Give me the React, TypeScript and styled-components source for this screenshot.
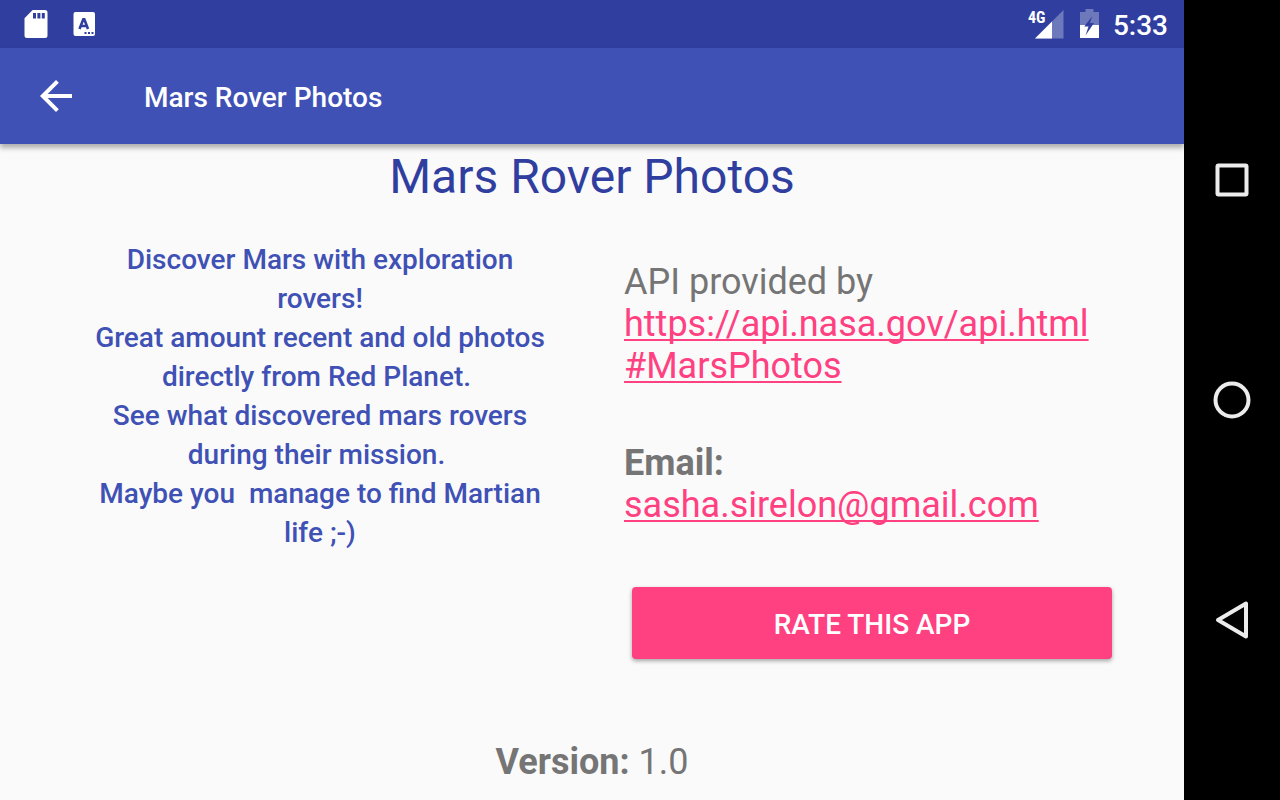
import React from "react";
import styled, { createGlobalStyle } from "styled-components";

const GlobalStyle = createGlobalStyle`
  * { box-sizing: border-box; }
  body { margin: 0; background: #fafafa; font-family: Roboto, "Liberation Sans", sans-serif; }
`;

const Screen = styled.div`
  display: flex;
  min-height: 100vh;
`;

const AppWindow = styled.div`
  flex: 1;
  min-width: 0;
  display: flex;
  flex-direction: column;
  background: #fafafa;
`;

const StatusBar = styled.div`
  display: flex;
  align-items: center;
  justify-content: space-between;
  height: 48px;
  padding: 0 16px 0 24px;
  background: #303f9f;
  color: #fff;
`;

const StatusGroup = styled.div<{ $gap: number }>`
  display: flex;
  align-items: center;
  gap: ${(p) => p.$gap}px;
`;

const Clock = styled.time`
  font-size: 28px;
  font-weight: 500;
  line-height: 32px;
  padding-top: 4px;
`;

const Toolbar = styled.header`
  display: flex;
  align-items: center;
  gap: 64px;
  height: 96px;
  padding: 0 32px;
  background: #3f51b5;
  color: #fff;
  box-shadow: 0 4px 5px rgba(0, 0, 0, 0.3);
`;

const IconButton = styled.button`
  display: flex;
  padding: 0;
  border: 0;
  background: none;
  color: inherit;
  cursor: pointer;
`;

const ToolbarTitle = styled.div`
  padding-top: 4px;
  font-size: 28px;
  font-weight: 500;
  line-height: 32px;
`;

const Content = styled.main`
  padding: 5px 48px 16px;
`;

const Title = styled.h1`
  margin: 0 0 35px;
  color: #303f9f;
  font-size: 48px;
  font-weight: 400;
  line-height: 56px;
  text-align: center;
`;

const Columns = styled.div`
  display: grid;
  grid-template-columns: 1fr 1fr;
`;

const Description = styled.p`
  margin: 0;
  padding: 0 40px;
  color: #3f51b5;
  font-size: 28px;
  font-weight: 500;
  line-height: 39px;
  text-align: center;
  white-space: pre-wrap;
`;

const Details = styled.div`
  display: flex;
  flex-direction: column;
  gap: 55px;
  padding: 21px 16px 0 32px;
`;

const Info = styled.p`
  margin: 0;
  color: #757575;
  font-size: 36px;
  line-height: 42px;
`;

const Link = styled.a`
  color: #ff4081;
  text-decoration: underline;
  text-decoration-thickness: 2px;
  text-underline-offset: 3px;
  text-decoration-skip-ink: none;
`;

const RateButton = styled.button`
  height: 72px;
  margin: 6px 8px 0;
  padding: 4px 16px 0;
  border: 0;
  border-radius: 4px;
  background: #ff4081;
  color: #fff;
  font: 500 28px/32px Roboto, "Liberation Sans", sans-serif;
  text-transform: uppercase;
  box-shadow: 0 2px 4px rgba(0, 0, 0, 0.35);
  cursor: pointer;
`;

const Version = styled(Info)`
  margin-top: 82px;
  text-align: center;
`;

const SystemNav = styled.nav`
  display: flex;
  flex-direction: column;
  align-items: center;
  justify-content: center;
  gap: 172px;
  flex: 0 0 96px;
  background: #000;
  color: #ececec;
`;

const SdCardIcon = () => (
  <svg width="24" height="28" viewBox="0 0 24 28" aria-hidden="true">
    <path
      fill="#fff"
      fillRule="evenodd"
      d="M8.6 0H21a2.5 2.5 0 0 1 2.5 2.5v23A2.5 2.5 0 0 1 21 28H3a2.5 2.5 0 0 1-2.5-2.5V8.2zM9 3v5.400h3V3zM13.400 3v5.400h3V3zM17.800 3v5.400h3V3z"
    />
  </svg>
);

const KeyboardIcon = () => (
  <svg width="22" height="24" viewBox="0 0 22 24" aria-hidden="true">
    <rect x="0.500" width="21.500" height="24" rx="2" fill="#fff" />
    <path d="M6.500 17 10.300 7.200h1l3.700 9.800M8.500 14h4.500" fill="none" stroke="#303f9f" strokeWidth="2.600" />
    <path d="M11.500 20h2v2h-2zM15 20h2v2h-2zM18.500 20h2v2h-2z" fill="#303f9f" />
  </svg>
);

const SignalIcon = () => (
  <svg width="38" height="32" viewBox="0 0 38 32" role="img" aria-label="4G signal">
    <path d="M35.500 2v28.500H7z" fill="#fff" fillOpacity="0.3" />
    <path d="M24 13.500v17H7z" fill="#fff" />
    <text x="0" y="15" fill="#fff" fontFamily="Roboto Condensed, Roboto, sans-serif" fontSize="16" fontWeight="700">
      4G
    </text>
  </svg>
);

const BatteryIcon = () => (
  <svg width="19" height="30" viewBox="0 0 19 30" aria-hidden="true">
    <path d="M5.500 0h8v3H19v13H0V3h5.500z" fill="#fff" fillOpacity="0.3" />
    <path d="M0 16h19v13H0z" fill="#fff" />
    <path d="M12 7.500 4.200 17.500H8.500L5.500 26.500 14 14H10z" fill="#303f9f" />
  </svg>
);

const BackArrowIcon = () => (
  <svg width="48" height="48" viewBox="0 0 24 24" aria-hidden="true">
    <path fill="#fff" d="M20 11H7.830l5.590-5.590L12 4l-8 8 8 8 1.410-1.410L7.830 13H20v-2z" />
  </svg>
);

const NavGlyph = ({ children }: { children: React.ReactNode }) => (
  <svg width="48" height="48" viewBox="0 0 48 48" fill="none" stroke="currentColor" strokeWidth="4" strokeLinejoin="round" aria-hidden="true">
    {children}
  </svg>
);

export default function App() {
  return (
    <Screen>
      <GlobalStyle />
      <AppWindow>
        <StatusBar>
          <StatusGroup $gap={25}>
            <SdCardIcon />
            <KeyboardIcon />
          </StatusGroup>
          <StatusGroup $gap={14}>
            <SignalIcon />
            <BatteryIcon />
            <Clock>5:33</Clock>
          </StatusGroup>
        </StatusBar>
        <Toolbar>
          <IconButton type="button" aria-label="Navigate up">
            <BackArrowIcon />
          </IconButton>
          <ToolbarTitle>Mars Rover Photos</ToolbarTitle>
        </Toolbar>
        <Content>
          <Title>Mars Rover Photos</Title>
          <Columns>
            <Description>
              {"Discover Mars with exploration rovers!\nGreat amount recent and old photos directly from Red Planet.\u00a0\nSee what discovered mars rovers during their mission.\u00a0\nMaybe you  manage to find Martian life ;-)"}
            </Description>
            <Details>
              <Info>
                API provided by{" "}
                <Link href="https://api.nasa.gov/api.html#MarsPhotos">
                  https://api.nasa.gov/api.html
                  <wbr />
                  #MarsPhotos
                </Link>
              </Info>
              <Info>
                <b>Email:</b>
                <br />
                <Link href="mailto:sasha.sirelon@gmail.com">sasha.sirelon@gmail.com</Link>
              </Info>
              <RateButton type="button">Rate this app</RateButton>
            </Details>
          </Columns>
          <Version>
            <b>Version:</b> 1.0
          </Version>
        </Content>
      </AppWindow>
      <SystemNav aria-label="System navigation">
        <IconButton type="button" aria-label="Recent apps">
          <NavGlyph>
            <rect x="9.500" y="9.500" width="29" height="29" rx="1" />
          </NavGlyph>
        </IconButton>
        <IconButton type="button" aria-label="Home">
          <NavGlyph>
            <circle cx="24" cy="24" r="16.500" />
          </NavGlyph>
        </IconButton>
        <IconButton type="button" aria-label="Back">
          <NavGlyph>
            <path d="M38 7.500v33L10 24z" />
          </NavGlyph>
        </IconButton>
      </SystemNav>
    </Screen>
  );
}
